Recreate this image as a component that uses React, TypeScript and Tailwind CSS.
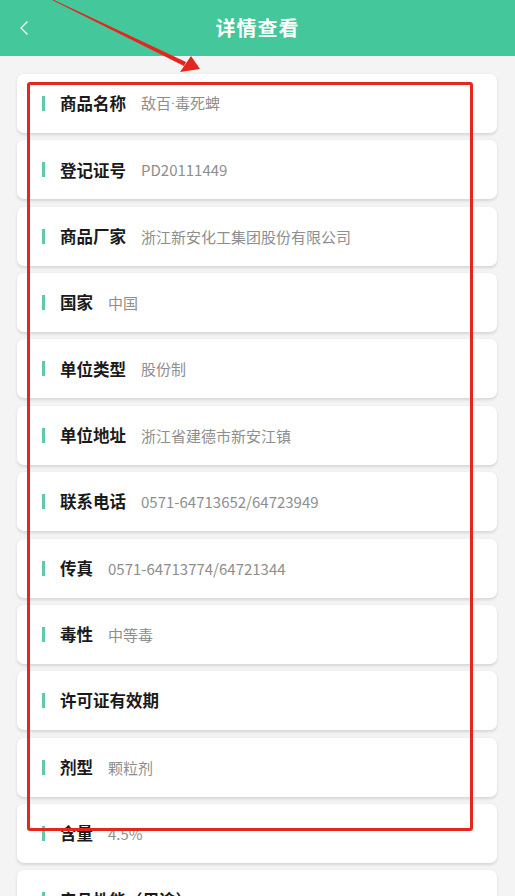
import { ChevronLeft } from "lucide-react";

const rows: { label: string; value: string }[] = [
  { label: "商品名称", value: "敌百·毒死蜱" },
  { label: "登记证号", value: "PD20111449" },
  { label: "商品厂家", value: "浙江新安化工集团股份有限公司" },
  { label: "国家", value: "中国" },
  { label: "单位类型", value: "股份制" },
  { label: "单位地址", value: "浙江省建德市新安江镇" },
  { label: "联系电话", value: "0571-64713652/64723949" },
  { label: "传真", value: "0571-64713774/64721344" },
  { label: "毒性", value: "中等毒" },
  { label: "许可证有效期", value: "" },
  { label: "剂型", value: "颗粒剂" },
  { label: "含量", value: "4.5%" },
  { label: "产品性能（用途）", value: "" },
];

// the CJK font draws "·" full width; take it from a latin face instead
function Value({ text }: { text: string }) {
  const parts = text.split("·");
  return (
    <span className="text-[15px] text-[#8e8e8e] leading-none">
      {parts.map((p, i) => (
        <span key={i}>
          {i > 0 && <span style={{ fontFamily: '"Roboto", sans-serif' }}>·</span>}
          {p}
        </span>
      ))}
    </span>
  );
}

export default function App() {
  return (
    <div
      className="relative w-[515px] h-[896px] overflow-hidden bg-[#f4f4f5]"
      style={{ fontFamily: '"Noto Sans CJK SC", "Noto Sans", sans-serif' }}
    >
      {/* Header */}
      <header className="relative h-[56px] bg-[#43c79b] flex items-center justify-center">
        <ChevronLeft className="absolute left-[12px] top-[16px] text-white" size={24} strokeWidth={1.3} />
        <h1 className="text-white text-[20px] font-bold tracking-[1px]">详情查看</h1>
      </header>

      {/* Detail cards */}
      <div className="flex flex-col gap-[7.36px] pt-[18px] pl-[17px] pr-[18px]">
        {rows.map((row) => (
          <div
            key={row.label}
            className="h-[59px] shrink-0 bg-white rounded-[7px] shadow-[0_1.5px_3px_rgba(0,0,0,0.12)] flex items-center pl-[25px]"
          >
            <span className="w-[3px] h-[15px] bg-[#5fc9a3] mr-[15px]" />
            <span className="text-[16.5px] font-bold text-[#1a1a1a] mr-[15px] leading-none">{row.label}</span>
            <Value text={row.value} />
          </div>
        ))}
      </div>

      {/* Annotation overlay */}
      <div className="absolute left-[27px] top-[82px] w-[446px] h-[749px] border-[3px] border-[#e3261e] rounded-[3px] pointer-events-none" />
      <svg className="absolute left-0 top-0 pointer-events-none" width="515" height="100" viewBox="0 0 515 100">
        <polygon points="52,0 54,0 186,62 184,66" fill="#e3261e" />
        <polygon points="200,69 180,72 191,56" fill="#e3261e" />
      </svg>
    </div>
  );
}
